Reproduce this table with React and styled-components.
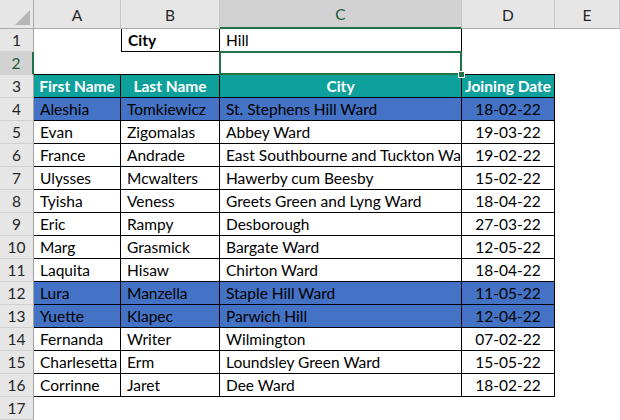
import React from 'react'
import styled, { createGlobalStyle, css } from 'styled-components'

const GlobalStyle = createGlobalStyle`
  html, body {
    margin: 0;
    padding: 0;
    background: #ffffff;
  }
  body {
    font-family: Lato, "Open Sans", "Liberation Sans", sans-serif;
    font-size: 15.5px;
    color: #000;
  }
`

const GREEN = '#217346'

const Sheet = styled.div`
  display: grid;
  grid-template-columns: 34px 87px 99px 242px 93px 65px;
  grid-template-rows: 29px;
  grid-auto-rows: 23px;
  width: 620px;
  height: 420px;
  overflow: hidden;
  background: #fff;
`

const Corner = styled.div`
  box-sizing: border-box;
  background: #e6e6e6;
  border-right: 1px solid #ababab;
  border-bottom: 1px solid #ababab;
  display: flex;
  align-items: flex-end;
  justify-content: flex-end;
  padding: 0 3px 3px 0;
`

const ColHead = styled.div`
  box-sizing: border-box;
  background: #e6e6e6;
  border-right: 1px solid #c6c6c6;
  border-bottom: 1px solid #ababab;
  display: flex;
  align-items: center;
  justify-content: center;
  color: #262626;
  font-size: 15.5px;
  padding-top: 1px;
  ${p => p.$selected && css`
    background: #d2d2d2;
    border-bottom: 2px solid ${GREEN};
    color: #1c5a37;
  `}
`

const RowHead = styled.div`
  box-sizing: border-box;
  background: #e6e6e6;
  border-right: 1px solid #a0a0a0;
  border-bottom: 1px solid #d0d0d0;
  display: flex;
  align-items: center;
  justify-content: center;
  color: #262626;
  font-size: 15.5px;
  ${p => p.$selected && css`
    background: #d2d2d2;
    border-right: 2px solid ${GREEN};
    color: #1c5a37;
  `}
`

const fills = {
  teal: '#0ea19c',
  blue: '#4472c4',
}

const Cell = styled.div`
  box-sizing: border-box;
  background: ${p => fills[p.$fill] || '#fff'};
  color: ${p => (p.$fill === 'teal' ? '#fff' : '#000')};
  font-weight: ${p => (p.$bold ? 700 : 400)};
  text-align: ${p => p.$align || 'left'};
  padding: ${p => (p.$align === 'center' ? '0 1px' : '0 6px')};
  line-height: 22px;
  white-space: nowrap;
  overflow: hidden;
  border-top: ${p => (p.$edges?.includes('t') ? '1px solid #000' : 'none')};
  border-right: ${p => (p.$edges?.includes('r') ? '1px solid #000' : 'none')};
  border-bottom: ${p => (p.$edges?.includes('b') ? '1px solid #000' : 'none')};
  border-left: ${p => (p.$edges?.includes('l') ? '1px solid #000' : 'none')};
`

const ActiveCell = styled.div`
  box-sizing: border-box;
  position: relative;
  z-index: 2;
  margin: -1px 0 0 -1px;
  border: 2px solid ${GREEN};
  background: #fff;

  &::after {
    content: '';
    position: absolute;
    right: -5px;
    bottom: -5px;
    width: 5px;
    height: 5px;
    background: ${GREEN};
    border: 1px solid #fff;
  }
`

const people = [
  { first: 'Aleshia', last: 'Tomkiewicz', city: 'St. Stephens Hill Ward', date: '18-02-22', hi: true },
  { first: 'Evan', last: 'Zigomalas', city: 'Abbey Ward', date: '19-03-22' },
  { first: 'France', last: 'Andrade', city: 'East Southbourne and Tuckton Ward', date: '19-02-22' },
  { first: 'Ulysses', last: 'Mcwalters', city: 'Hawerby cum Beesby', date: '15-02-22' },
  { first: 'Tyisha', last: 'Veness', city: 'Greets Green and Lyng Ward', date: '18-04-22' },
  { first: 'Eric', last: 'Rampy', city: 'Desborough', date: '27-03-22' },
  { first: 'Marg', last: 'Grasmick', city: 'Bargate Ward', date: '12-05-22' },
  { first: 'Laquita', last: 'Hisaw', city: 'Chirton Ward', date: '18-04-22' },
  { first: 'Lura', last: 'Manzella', city: 'Staple Hill Ward', date: '11-05-22', hi: true },
  { first: 'Yuette', last: 'Klapec', city: 'Parwich Hill', date: '12-04-22', hi: true },
  { first: 'Fernanda', last: 'Writer', city: 'Wilmington', date: '07-02-22' },
  { first: 'Charlesetta', last: 'Erm', city: 'Loundsley Green Ward', date: '15-05-22' },
  { first: 'Corrinne', last: 'Jaret', city: 'Dee Ward', date: '18-02-22' },
]

const CornerMark = () => (
  <svg width="15" height="15" viewBox="0 0 15 15">
    <polygon points="15,0 15,15 0,15" fill="#b6b6b6" />
  </svg>
)

export default function App() {
  return (
    <>
      <GlobalStyle />
      <Sheet>
        <Corner><CornerMark /></Corner>
        {['A', 'B', 'C', 'D', 'E'].map(c => (
          <ColHead key={c} $selected={c === 'C'}>{c}</ColHead>
        ))}

        <RowHead>1</RowHead>
        <Cell />
        <Cell $edges="lrb" $bold>City</Cell>
        <Cell $edges="r">Hill</Cell>
        <Cell />
        <Cell />

        <RowHead $selected>2</RowHead>
        <Cell $edges="b" />
        <Cell $edges="b" />
        <ActiveCell />
        <Cell $edges="b" />
        <Cell />

        <RowHead>3</RowHead>
        <Cell $edges="rb" $fill="teal" $bold $align="center">First Name</Cell>
        <Cell $edges="rb" $fill="teal" $bold $align="center">Last Name</Cell>
        <Cell $edges="rb" $fill="teal" $bold $align="center">City</Cell>
        <Cell $edges="rb" $fill="teal" $bold $align="center">Joining Date</Cell>
        <Cell />

        {people.map((p, i) => {
          const fill = p.hi ? 'blue' : undefined
          return (
            <React.Fragment key={p.first}>
              <RowHead>{i + 4}</RowHead>
              <Cell $edges="rb" $fill={fill}>{p.first}</Cell>
              <Cell $edges="rb" $fill={fill}>{p.last}</Cell>
              <Cell $edges="rb" $fill={fill}>{p.city}</Cell>
              <Cell $edges="rb" $fill={fill} $align="center">{p.date}</Cell>
              <Cell />
            </React.Fragment>
          )
        })}

        <RowHead>17</RowHead>
        <Cell />
        <Cell />
        <Cell />
        <Cell />
        <Cell />
      </Sheet>
    </>
  )
}
